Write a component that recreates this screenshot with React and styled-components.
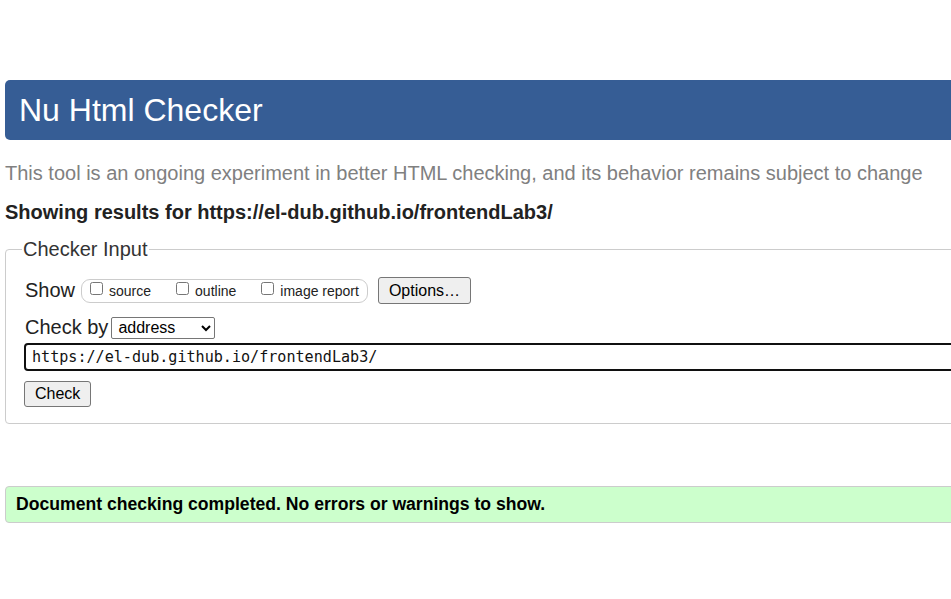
import React from 'react';
import styled, { createGlobalStyle } from "styled-components";

const GlobalStyle = createGlobalStyle`
    html, body {
        margin: 0;
        padding: 0;
        overflow: hidden;
        background: #fff;
        font-family: "Liberation Sans", Arial, sans-serif;
    }
`;

const Page = styled.div`
    width: 1240px;
    padding: 80px 0 40px 5px;
`;

const Header = styled.h1`
    margin: 0;
    height: 60px;
    line-height: 60px;
    padding-left: 14px;
    background-color: #365d95;
    color: #fff;
    font-size: 32px;
    font-weight: normal;
    border-radius: 5px;
`;

const Intro = styled.p`
    margin: 21px 0 0;
    font-size: 20px;
    line-height: 24px;
    color: #808080;
`;

const Results = styled.p`
    margin: 15px 0 0;
    font-size: 20px;
    line-height: 24px;
    font-weight: bold;
    color: #222;
`;

const Fieldset = styled.fieldset`
    margin: 13px 0 0;
    padding: 4px 18px 16px 18px;
    border: 1px solid #ccc;
    border-radius: 4px;
`;

const Legend = styled.legend`
    padding: 0 1px;
    margin-left: -2px;
    font-size: 20px;
    line-height: 24px;
    color: #333;
`;

const Row = styled.div`
    display: flex;
    align-items: center;
    gap: ${p => p.gap || 0}px;
    margin-top: ${p => p.top || 0}px;
`;

const Label = styled.span`
    font-size: 20px;
    color: #222;
    margin-left: 1px;
`;

const Pill = styled.div`
    display: flex;
    align-items: center;
    height: 22px;
    padding: 0 8px 0 8px;
    border: 1px solid #ccc;
    border-radius: 9px;
    gap: 25px;
`;

const Opt = styled.label`
    display: flex;
    align-items: center;
    font-size: 14px;
    color: #222;
    gap: 6px;
`;

const Box = styled.input`
    width: 13px;
    height: 13px;
    margin: 0 0 4px 0;
`;

const Button = styled.button`
    height: ${p => p.h || 27}px;
    padding: 0 10px;
    margin-left: ${p => p.offset || 0}px;
    background: #efefef;
    border: 1px solid #767676;
    border-radius: 3px;
    font-family: "Liberation Sans", Arial, sans-serif;
    font-size: 16px;
    color: #000;
`;

const Select = styled.select`
    width: 104px;
    height: 22px;
    font-family: "Liberation Sans", Arial, sans-serif;
    font-size: 16px;
    color: #000;
    border: 1px solid #767676;
    border-radius: 2px;
    background: #fff;
    padding: 0 2px;
`;

const UrlInput = styled.input`
    display: block;
    box-sizing: border-box;
    width: 100%;
    height: 28px;
    margin-top: 4px;
    padding: 0 6px;
    border: 2px solid #101010;
    border-radius: 4px;
    font-family: "DejaVu Sans Mono", "Liberation Mono", monospace;
    font-size: 15.1px;
    color: #111;
    outline: none;
`;

const Success = styled.div`
    margin-top: 62px;
    height: 35px;
    line-height: 35px;
    padding-left: 10px;
    background: #ccffcc;
    border: 1px solid #ccc;
    border-radius: 4px;
    font-size: 17.6px;
    font-weight: bold;
    color: #000;
`;

const App = () => {
  return (
    <Page>
        <GlobalStyle />
        <Header>Nu Html Checker</Header>
        <Intro>This tool is an ongoing experiment in better HTML checking, and its behavior remains subject to change</Intro>
        <Results>Showing results for https://el-dub.github.io/frontendLab3/</Results>
        <Fieldset>
            <Legend>Checker Input</Legend>
            <Row top={12} gap={6}>
                <Label>Show</Label>
                <Pill>
                    <Opt><Box type="checkbox" />source</Opt>
                    <Opt><Box type="checkbox" />outline</Opt>
                    <Opt><Box type="checkbox" />image report</Opt>
                </Pill>
                <Button offset={4}>Options…</Button>
            </Row>
            <Row top={12} gap={3}>
                <Label>Check by</Label>
                <Select defaultValue="address">
                    <option value="address">address</option>
                    <option value="file">file upload</option>
                    <option value="text">text input</option>
                </Select>
            </Row>
            <UrlInput defaultValue="https://el-dub.github.io/frontendLab3/" />
            <Row top={10}>
                <Button h={26}>Check</Button>
            </Row>
        </Fieldset>
        <Success>Document checking completed. No errors or warnings to show.</Success>
    </Page>
  )
}

export default App
